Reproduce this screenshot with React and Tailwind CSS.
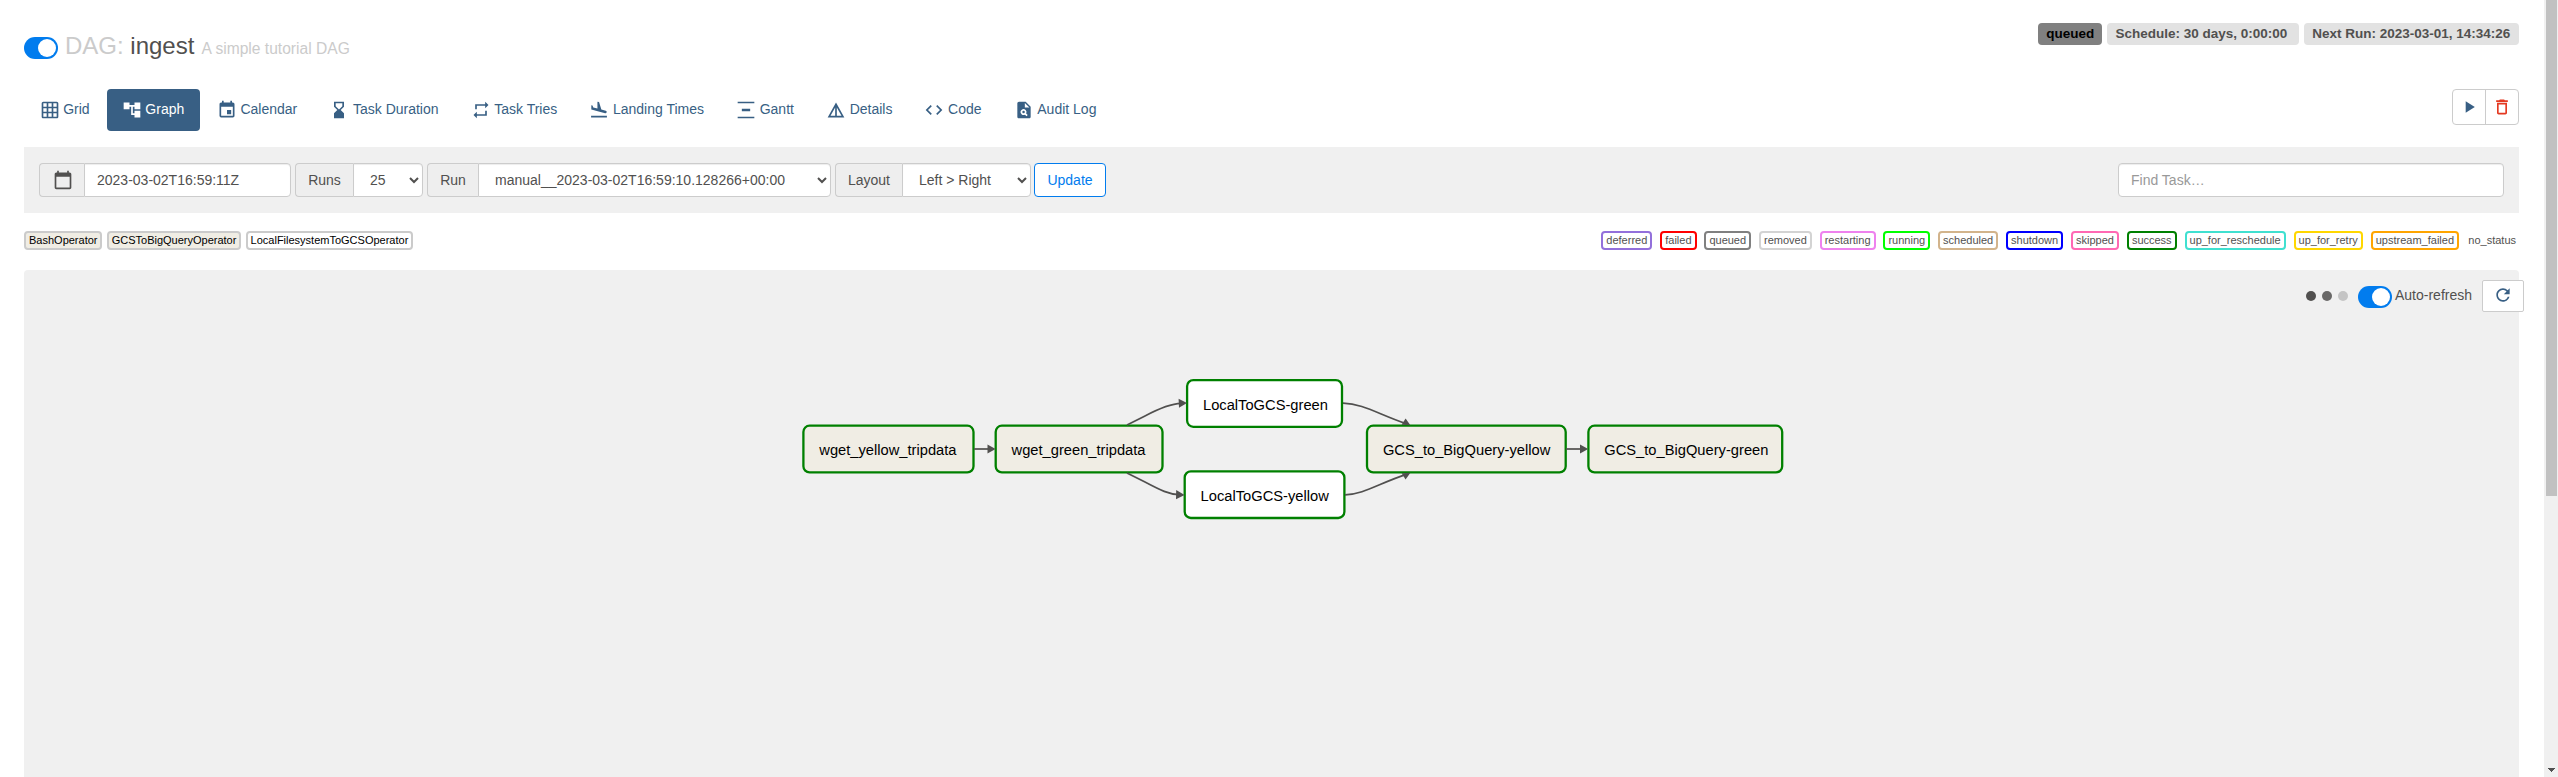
import React from "react";
import {
  MdGridOn, MdAccountTree, MdEvent, MdHourglassBottom, MdRepeat, MdFlightLand,
  MdVerticalDistribute, MdDetails, MdCode, MdPlagiarism, MdPlayArrow,
  MdDeleteOutline, MdCalendarToday, MdRefresh,
} from "react-icons/md";

const tabs = [
  ["Grid", MdGridOn],
  ["Graph", MdAccountTree],
  ["Calendar", MdEvent],
  ["Task Duration", MdHourglassBottom],
  ["Task Tries", MdRepeat],
  ["Landing Times", MdFlightLand],
  ["Gantt", MdVerticalDistribute],
  ["Details", MdDetails],
  ["Code", MdCode],
  ["Audit Log", MdPlagiarism],
];

const operators = [
  ["BashOperator", "bg-[#f0ede4]"],
  ["GCSToBigQueryOperator", "bg-[#f0ede4]"],
  ["LocalFilesystemToGCSOperator", "bg-white"],
];

const states = [
  ["deferred", "border-[mediumpurple]"],
  ["failed", "border-[red]"],
  ["queued", "border-[gray]"],
  ["removed", "border-[lightgrey]"],
  ["restarting", "border-[violet]"],
  ["running", "border-[lime]"],
  ["scheduled", "border-[tan]"],
  ["shutdown", "border-[blue]"],
  ["skipped", "border-[hotpink]"],
  ["success", "border-[green]"],
  ["up_for_reschedule", "border-[turquoise]"],
  ["up_for_retry", "border-[gold]"],
  ["upstream_failed", "border-[orange]"],
];

const nodes = [
  { id: "wget_yellow_tripdata", x: 803.4, y: 425.7, w: 170.1, fill: "#f0ede4" },
  { id: "wget_green_tripdata", x: 995.7, y: 425.7, w: 166.8, fill: "#f0ede4" },
  { id: "LocalToGCS-green", x: 1187.1, y: 380.1, w: 154.9, fill: "#fff" },
  { id: "LocalToGCS-yellow", x: 1184.7, y: 471.3, w: 159.7, fill: "#fff" },
  { id: "GCS_to_BigQuery-yellow", x: 1367, y: 425.7, w: 198.7, fill: "#f0ede4" },
  { id: "GCS_to_BigQuery-green", x: 1588.4, y: 425.7, w: 193.8, fill: "#f0ede4" },
];

const edges = [
  "M974 449H990",
  "M1127 425L1144.5 416.2C1161 407.5 1171 403.6 1181 403.4",
  "M1127 473L1144.5 481.8C1161 490.5 1169 494.4 1179 494.6",
  "M1343 403.2C1363 403.6 1378 414 1406 423.6",
  "M1345 494.8C1363 494.4 1378 484 1406 474.4",
  "M1566 449H1583",
];

const arrows = [
  "M987.5 444.6L995.6 449L987.5 453.4Z",
  "M1178.6 398.8L1187 403.1L1179 407.8Z",
  "M1176.2 490L1184.6 494.9L1176 499.3Z",
  "M1405.6 418.4L1410.4 425.3L1401.6 424.8Z",
  "M1405.6 479.6L1410.4 472.7L1401.6 473.2Z",
  "M1580 444.6L1588.2 449L1580 453.4Z",
];

function Toggle() {
  return (
    <span className="flex h-[22px] w-[34px] shrink-0 items-center justify-end rounded-full bg-[#017cee] p-0.5">
      <span className="size-[18px] rounded-full bg-white" />
    </span>
  );
}

function Addon({ children, className }) {
  return (
    <span className={"flex h-full shrink-0 items-center justify-center rounded-l border border-r-0 border-[#ccc] bg-[#eee] " + className}>
      {children}
    </span>
  );
}

function SelectGroup({ label, addon, width, value }) {
  return (
    <div className="flex h-[34px]">
      <Addon className={addon}>{label}</Addon>
      <select className={"h-[34px] rounded-r border border-[#ccc] bg-white px-3 py-1.5 shadow-[inset_0_1px_1px_rgba(0,0,0,0.075)] " + width}>
        <option>{value}</option>
      </select>
    </div>
  );
}

function Dag() {
  return (
    <svg className="block" width="2495" height="507" viewBox="24 270 2495 507">
      {nodes.map((n) => (
        <g key={n.id}>
          <rect x={n.x} y={n.y} width={n.w} height="46.7" rx="6.2" fill={n.fill} stroke="green" strokeWidth="2.3" />
          <text x={n.x + 15.9} y={n.y + 29.4} fontSize="14.7" fill="#000">{n.id}</text>
        </g>
      ))}
      {edges.map((d) => <path key={d} d={d} fill="none" stroke="#51504f" strokeWidth="1.7" />)}
      {arrows.map((d) => <path key={d} d={d} fill="#51504f" />)}
    </svg>
  );
}

export default function App() {
  return (
    <div className="flex h-[777px] w-[2558px] overflow-hidden bg-white font-['Liberation_Sans',Arial,sans-serif] text-sm leading-5 text-[#51504f]">
      <main className="flex w-[2544px] flex-col pr-[25px] pl-6">
        <header className="flex h-[89px] items-start justify-between">
          <div className="flex items-start pt-[32px]">
            <div className="pt-[5px]"><Toggle /></div>
            <h1 className="pl-[7px] text-2xl leading-[28px] whitespace-pre">
              <span className="text-[#cbcbcb]">DAG: </span>ingest<span className="ml-[7.2px] text-[15.6px] text-[#cbcbcb]">A simple tutorial DAG</span>
            </h1>
          </div>
          <div className="flex gap-[5px] pt-[23px] text-[13.5px] leading-[22px] font-bold whitespace-pre">
            <span className="rounded bg-[gray] px-[8.1px] text-black">queued</span>
            <span className="rounded bg-[#e2e2e2] px-[8.1px]">{"Schedule: 30 days, 0:00:00 "}</span>
            <span className="rounded bg-[#e2e2e2] pr-[8.7px] pl-[8.1px]">Next Run: 2023-03-01, 14:34:26</span>
          </div>
        </header>

        <div className="flex h-[58px] items-start justify-between">
          <nav className="flex gap-0.5 pl-[0.5px]">
            {tabs.map(([label, Icon]) => (
              <a
                key={label}
                className={
                  "flex h-[42px] items-center gap-[3.7px] rounded pl-[15px] " +
                  (label === "Graph" ? "bg-[#385f84] pr-[15.5px] text-white" : "pr-[15px] text-[#385f84]")
                }
              >
                <Icon size={20} />
                <span className="-mt-0.5">{label}</span>
              </a>
            ))}
          </nav>
          <div className="flex h-9 w-[67px] rounded border border-[#ccc]">
            <button className="flex w-[33px] items-center justify-center border-r border-[#ccc] text-[#385f84]"><MdPlayArrow size={20} /></button>
            <button className="flex flex-1 items-center justify-center text-[#e43921]"><MdDeleteOutline size={20} /></button>
          </div>
        </div>

        <section className="flex h-[66px] shrink-0 items-center justify-between bg-[#f0f0f0] px-[15px]">
          <div className="flex">
            <div className="mr-1 flex h-[34px]">
              <Addon className="w-[45px] pl-px"><MdCalendarToday size={20} /></Addon>
              <input
                defaultValue="2023-03-02T16:59:11Z"
                className="h-[34px] w-[207px] rounded-r border border-[#ccc] bg-white px-3 shadow-[inset_0_1px_1px_rgba(0,0,0,0.075)]"
              />
            </div>
            <div className="mr-1"><SelectGroup label="Runs" addon="w-[58px]" width="w-[70px]" value="25" /></div>
            <div className="mr-1"><SelectGroup label="Run" addon="w-[51px]" width="w-[353px]" value="manual__2023-03-02T16:59:10.128266+00:00" /></div>
            <div className="mr-[3px]"><SelectGroup label="Layout" addon="w-[67px]" width="w-[129px]" value="Left > Right" /></div>
            <button className="h-[34px] w-[72px] rounded border border-[#017cee] bg-white text-[#017cee]">Update</button>
          </div>
          <input
            placeholder="Find Task…"
            className="h-[34px] w-[386px] rounded border border-[#ccc] bg-white px-3 shadow-[inset_0_1px_1px_rgba(0,0,0,0.075)] placeholder:text-[#999]"
          />
        </section>

        <section className="flex h-[57px] shrink-0 items-start justify-between pt-[18px] text-[11px] leading-[15px]">
          <div className="flex gap-[4.2px] text-black">
            {operators.map(([name, bg]) => (
              <span key={name} className={"rounded border-2 border-[#cbcbcb] px-[3px] " + bg}>{name}</span>
            ))}
          </div>
          <div className="flex gap-[7.9px]">
            {states.map(([name, border]) => (
              <span key={name} className={"rounded border-2 px-[3px] " + border}>{name}</span>
            ))}
            <span className="border-y-2 border-white pr-[3px] pl-[1.4px]">no_status</span>
          </div>
        </section>

        <section className="relative h-[507px] shrink-0 rounded-t bg-[#f0f0f0]">
          <Dag />
          <div className="absolute top-[10px] -right-[5px] flex h-8 items-center">
            <div className="mr-[10px] flex gap-1.5">
              <span className="size-2.5 rounded-full bg-[#51504f]" />
              <span className="size-2.5 rounded-full bg-[#696867]" />
              <span className="size-2.5 rounded-full bg-[#c4c4c4]" />
            </div>
            <div className="mt-[2px]"><Toggle /></div>
            <span className="-mt-0.5 ml-[3px] w-[87px]">Auto-refresh</span>
            <button className="flex h-8 w-[42px] items-center justify-center rounded-xs border border-[#ccc] bg-white pb-0.5 text-[#385f84]">
              <MdRefresh size={20} />
            </button>
          </div>
        </section>
      </main>

      <aside className="flex h-full w-[14px] flex-col items-center justify-between bg-[#f0f0f0] pb-[5px] pl-px">
        <div className="h-[496px] w-[11px] bg-[#c1c1c1]" />
        <svg width="7" height="4" viewBox="0 0 7 4" shapeRendering="crispEdges"><path d="M0 0H7L3.5 4Z" fill="#505050" /></svg>
      </aside>
    </div>
  );
}
